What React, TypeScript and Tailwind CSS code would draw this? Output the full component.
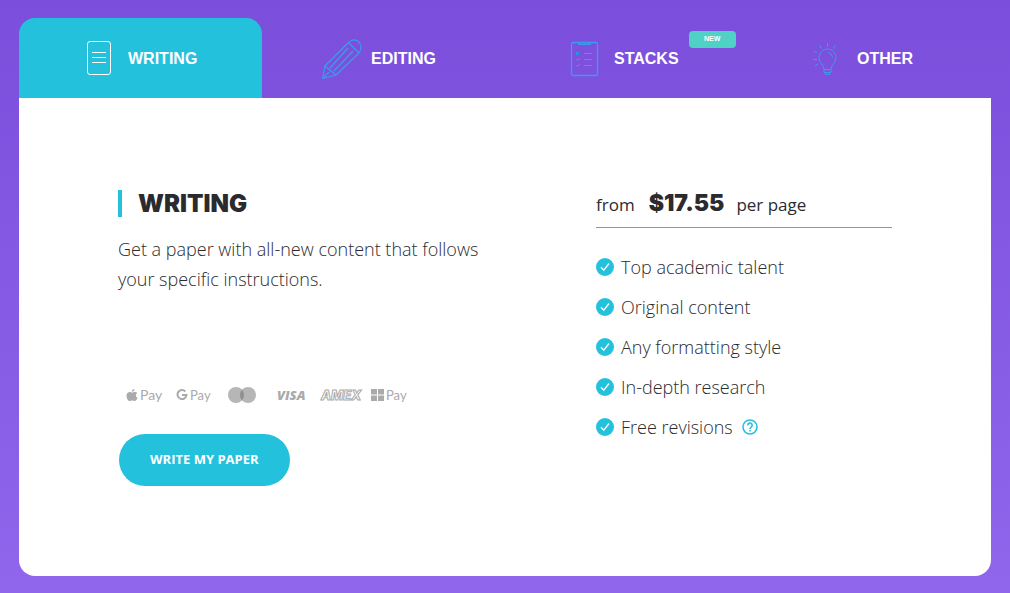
import React, { useState } from 'react';

const PageIcon = () => (
  <svg viewBox="0 0 40 40" className="h-10 w-10" fill="none" stroke="currentColor">
    <rect x="8.5" y="2.5" width="23" height="33" rx="2.5" />
    <path d="M13 13.5h14M13 18.5h14M13 23.5h14" />
  </svg>
);

const PencilIcon = () => (
  <svg viewBox="0 0 40 40" className="h-10 w-10" fill="none" stroke="currentColor" strokeWidth="1.200" strokeLinejoin="round">
    <path d="M.7 39.300L3 27L26.500 3.500Q32-1.500 37 3Q41 8 37 14L14 36Z" />
    <path d="M3 27L14 36M26.500 3.500L37 14M26 9L8 29M31 12L12 32M.7 39.300L7 33" />
  </svg>
);

const StacksIcon = () => (
  <svg viewBox="0 0 40 40" className="h-10 w-10" fill="none" stroke="currentColor">
    <rect x="6.5" y="3.5" width="26" height="33" rx="1.5" strokeWidth="1.300" />
    <path d="M13.5 3.5v2h12v-2M14 5h11" />
    <path d="M19 14.5h8M19 20.5h8M19 26.5h8" />
    <path d="M11 13l3 3M14 13l-3 3M11 20l1.500 1.500L15 19M11 26l1.500 1.500L15 25" />
  </svg>
);

const BulbIcon = () => (
  <svg viewBox="0 0 40 40" className="h-10 w-10" fill="none" stroke="currentColor">
    <path d="M16 30.500c0-5-5-6-5-12a8.500 8.500 0 0 1 17 0c0 6-5 7-5 12z" />
    <path d="M16 30.500v3h7v-3M17.500 33.500v2h4v-2M20 13.500q4 .5 4.500 5" />
    <path d="M19.500 4v4M11.500 6l2 3.500M27.500 6l-2 3.500M6 12l3 2M5 20.500h4M7 27l3-2" />
  </svg>
);

const tabs = [
  { name: 'WRITING', icon: <PageIcon /> },
  { name: 'EDITING', icon: <PencilIcon /> },
  { name: 'STACKS', icon: <StacksIcon />, isNew: true },
  { name: 'OTHER', icon: <BulbIcon /> }
];

const features = [
  'Top academic talent',
  'Original content',
  'Any formatting style',
  'In-depth research',
  'Free revisions'
];

const CheckIcon = () => (
  <svg viewBox="0 0 18 18" className="h-[18px] w-[18px] shrink-0" fill="none">
    <circle cx="9" cy="9" r="9" fill="#24c1dd" />
    <path d="M5 9.300l2.800 2.900L13 5.500" stroke="white" strokeWidth="1.300" />
  </svg>
);

const PaymentMethods = () => (
  <div className="flex h-5 items-center pl-[7px] font-['Lato',sans-serif] text-sm text-[#aaaaaa]">
    <div className="flex w-[50px] items-center gap-0.5">
      <svg viewBox="0 0 24 24" className="h-3 w-3" fill="currentColor" aria-hidden="true">
        <path d="M17 0c.3 3-2.500 5.500-5.300 5.400C11.400 2.600 14 .3 17 0zM22.500 8.200c-4 2.500-3.200 7.800.5 9.300-1 3-3.200 6.500-5.600 6.500-2 0-2.500-1.200-5-1.200S9 24 7.200 24C3.500 24 1 17.500 1 13.500 1 8.500 4.300 6 7.500 6c2 0 3.700 1.300 5 1.300S16 5.800 18.500 6c1.600.1 3 .8 4 2.200z" />
      </svg>
      Pay
    </div>
    <div className="flex w-[52px] items-center gap-0.5 text-[13px]">
      <svg viewBox="0 0 12 12" className="h-3 w-3" fill="none" stroke="currentColor" strokeWidth="2" aria-hidden="true">
        <path d="M9.300 2.500A4.500 4.500 0 1 0 10.500 6H6" />
      </svg>
      Pay
    </div>
    <svg viewBox="0 0 28 16" className="mr-[21px] h-4 w-7" role="img" aria-label="Mastercard">
      <circle cx="8" cy="8" r="8" fill="#b6b6b6" />
      <circle cx="20" cy="8" r="8" fill="#b6b6b6" />
      <path d="M14 2.700a8 8 0 0 1 0 10.600a8 8 0 0 1 0-10.600" fill="#8f8f8f" />
    </svg>
    <span className="w-11 font-['Open_Sans',sans-serif] text-[13px] font-extrabold italic">VISA</span>
    <span className="w-[50px] font-['Inter',sans-serif] text-[13px] font-extrabold text-white italic [-webkit-text-stroke:1px_#aaaaaa]">AMEX</span>
    <div className="flex items-center gap-0.5 text-[13px]">
      <svg viewBox="0 0 13 12" className="h-3 w-[13px]" fill="currentColor" aria-hidden="true">
        <path d="M0 0h6v5.500H0zM7 0h6v5.500H7zM0 6.500h6V12H0zM7 6.500h6V12H7z" />
      </svg>
      Pay
    </div>
  </div>
);

const App: React.FC = () => {
  const [active, setActive] = useState<string>('WRITING');

  return (
    <div className="min-h-screen bg-linear-to-b from-[#7b4edb] to-[#9066ed] px-[19px] pt-[18px] pb-4 font-['Open_Sans',sans-serif] text-[#2b2b2f]">
      <nav className="grid grid-cols-4">
        {tabs.map((tab) => (
          <button
            key={tab.name}
            type="button"
            onClick={() => setActive(tab.name)}
            className={`flex h-20 items-center gap-[9px] rounded-t-2xl pt-0.5 pl-[60px] ${active === tab.name ? 'bg-[#24c1dd] text-white' : 'text-[#3c9bea]'}`}
          >
            {tab.icon}
            <span className="relative font-['Liberation_Sans',sans-serif] text-base font-bold text-white">
              {tab.name}
              {tab.isNew && (
                <span className="absolute -top-4 left-full ml-2.5 flex h-[17px] w-[47px] items-center justify-center rounded bg-[#4fd1c5] text-[7px] font-bold">
                  NEW
                </span>
              )}
            </span>
          </button>
        ))}
      </nav>

      <main className="flex justify-between rounded-b-2xl bg-white px-[99px] pt-[92px] pb-[90px]">
        <section className="w-[380px]">
          <h2 className="border-l-4 border-[#24c1dd] pl-4 font-['Inter',sans-serif] text-2xl leading-[27px] font-black">
            WRITING
          </h2>
          <p className="mt-[17px] text-lg leading-[30px] font-light">
            Get a paper with all-new content that follows your specific instructions.
          </p>
          <div className="mt-[91px] pl-px">
            <PaymentMethods />
            <button type="button" className="mt-[29px] h-[52px] rounded-full bg-[#24c1dd] px-[31px] text-[13px] font-bold text-white">
              WRITE MY PAPER
            </button>
          </div>
        </section>

        <section className="w-[296px]">
          <div className="flex h-[37px] items-baseline text-[17px] leading-[27px]">
            <span>from</span>
            <strong className="mr-3 ml-3.5 font-['Inter',sans-serif] text-[23px] leading-[27px] font-black">$17.55</strong>
            <span>per page</span>
          </div>
          <hr className="h-px border-0 bg-[#24c1dd]" />
          <ul className="mt-[19px] text-lg font-light">
            {features.map((feature) => (
              <li key={feature} className="flex h-10 items-center gap-[7px]">
                <CheckIcon />
                {feature}
                {feature === 'Free revisions' && (
                  <button type="button" aria-label="About free revisions" className="ml-0.5">
                    <svg viewBox="0 0 16 16" className="h-4 w-4" fill="none" stroke="#24c1dd" strokeWidth="1.600">
                      <circle cx="8" cy="8" r="7" />
                      <path d="M5.800 6.400a2.200 2.200 0 1 1 3.400 1.700Q8 8.900 8 9.900M8 11v1.600" />
                    </svg>
                  </button>
                )}
              </li>
            ))}
          </ul>
        </section>
      </main>
    </div>
  );
};

export default App;
